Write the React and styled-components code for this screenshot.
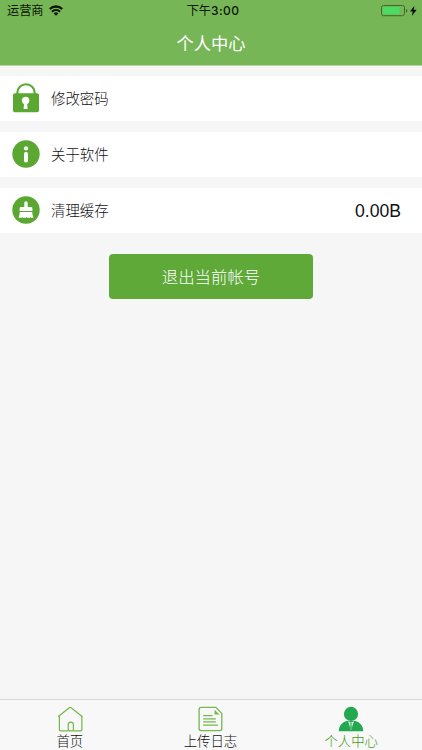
import React from "react"
import styled, { createGlobalStyle } from "styled-components"

const rows = [
  { id: "password", label: "修改密码", icon: <LockIcon /> },
  { id: "about", label: "关于软件", icon: <InfoIcon /> },
  { id: "cache", label: "清理缓存", icon: <BrushIcon />, value: "0.00B" },
]

const tabs = [
  { id: "home", label: "首页", icon: <HomeIcon /> },
  { id: "log", label: "上传日志", icon: <LogIcon /> },
  { id: "user", label: "个人中心", icon: <UserIcon />, active: true },
]

function WifiIcon() {
  return (
    <svg width="14" height="11" viewBox="0 0 14 11" fill="none" stroke="#0b1606">
      <path d="M.8 4a8.9 8.9 0 0 1 12.4 0" strokeWidth="2.3" />
      <path d="M3 6.7a5.6 5.6 0 0 1 8 0" strokeWidth="2.1" />
      <path d="M7 10.7 4.6 8.4a3.4 3.4 0 0 1 4.8 0z" fill="#0b1606" stroke="none" />
    </svg>
  )
}

function BatteryIcon() {
  return (
    <svg width="36" height="12" viewBox="0 0 36 12">
      <rect x=".5" y=".5" width="23" height="10.2" rx="2" fill="none" stroke="#41682f" />
      <rect x="2" y="2" width="16.6" height="7.2" rx=".6" fill="#4cdb62" />
      <path d="M25 4q1.4.4 1.4 1.8T25 7.6z" fill="#41682f" />
      <path d="M33.4.7 29 6.4h2.8l-1 4.6 4.9-6.2h-3z" fill="#070d04" />
    </svg>
  )
}

function LockIcon() {
  return (
    <svg width="28" height="30" viewBox="0 0 28 30">
      <path d="M5.3 12V9.9a8.7 8.7 0 0 1 17.4 0V12" fill="none" stroke="#5aa832" strokeWidth="2.1" />
      <rect x="1" y="10.2" width="26" height="19" rx="1.8" fill="#5aa832" />
      <circle cx="13.6" cy="17.5" r="3.7" fill="#fff" />
      <path d="M12.2 19h2.8l.6 7h-4z" fill="#fff" />
    </svg>
  )
}

function InfoIcon() {
  return (
    <svg width="28" height="28" viewBox="0 0 28 28">
      <circle cx="14" cy="14" r="13.7" fill="#5aa832" />
      <circle cx="14" cy="8.4" r="2.1" fill="#fff" />
      <rect x="12" y="11.9" width="4" height="10.6" rx="1.8" fill="#fff" />
    </svg>
  )
}

function BrushIcon() {
  return (
    <svg width="28" height="28" viewBox="0 0 28 28">
      <circle cx="14" cy="14" r="13.7" fill="#5aa832" />
      <path
        d="M12.3 11V7q0-1.8 1.7-1.8T15.7 7v4H19q1.4 0 1.4 1.4v2.6H7.6v-2.6Q7.6 11 9 11z"
        fill="#fff"
      />
      <path
        d="M7.8 15.9h12.4q.2 3.5 1.3 5.9h-2.6l-.6-.8-.4.8h-2.9l-.6-.9-.6.9h-2.9l-.5-.8-.7.8H6.5q1.1-2.4 1.3-5.9z"
        fill="#fff"
      />
    </svg>
  )
}

function HomeIcon() {
  return (
    <svg width="26" height="26" viewBox="0 0 26 26" fill="none" stroke="#72b84d" strokeWidth="1.2">
      <path d="M1.6 10.3 12.3 1.7q.9-.7 1.8 0l10.7 8.6" strokeLinecap="round" />
      <path d="M2.4 9.8v14q0 1 1 1h20.5q1 0 1-1v-14" />
      <path d="M11.2 24.8v-6.1a2.6 2.6 0 0 1 5.2 0v6.1" />
    </svg>
  )
}

function LogIcon() {
  return (
    <svg width="26" height="26" viewBox="0 0 26 26" fill="none" stroke="#72b84d" strokeWidth="1.3">
      <path d="M18.9 1.4H4.2q-2.1 0-2.1 2.1v19.1q0 2.1 2.1 2.1h18.5q2.1 0 2.1-2.1V7.4z" />
      <path d="M18.2 5.2v2.6h2.7z" fill="#72b84d" />
      <path d="M6.2 9.7h9.3M6.2 12.8h12.6M6.2 15.9h12.6M6.2 19.2H21" />
    </svg>
  )
}

function UserIcon() {
  return (
    <svg width="26" height="26" viewBox="0 0 26 26">
      <circle cx="13" cy="7.9" r="7.1" fill="#22a950" />
      <path d="M.8 25.3c0-5.3 3.2-9.1 8.1-10.3h8.2c4.9 1.2 8.1 5 8.1 10.3z" fill="#22a950" />
      <path d="m10.1 15.3 2.9 9 2.9-9-1.7.6h-2.4z" fill="#e5f3e9" />
      <path d="m13 16 1.2 1-.6 1.8.7 3.2-1.3 2-1.3-2 .7-3.2-.6-1.8z" fill="#5abb7a" />
    </svg>
  )
}

const App = () => {
  return (
    <>
      <GlobalStyle />
      <Screen>
        <Header>
          <StatusBar>
            <Carrier>
              运营商
              <WifiIcon />
            </Carrier>
            <Clock>
              下午<b>3:00</b>
            </Clock>
            <BatteryIcon />
          </StatusBar>
          <Title>个人中心</Title>
        </Header>
        <List>
          {rows.map(({ id, label, icon, value }) => (
            <Row key={id}>
              <RowIcon>{icon}</RowIcon>
              <RowLabel>{label}</RowLabel>
              {value && <RowValue>{value}</RowValue>}
            </Row>
          ))}
        </List>
        <LogoutButton>退出当前帐号</LogoutButton>
        <TabBar>
          {tabs.map(({ id, label, icon, active }) => (
            <Tab key={id} $active={active}>
              {icon}
              <span>{label}</span>
            </Tab>
          ))}
        </TabBar>
      </Screen>
    </>
  )
}

const GlobalStyle = createGlobalStyle`
  * {
    box-sizing: border-box;
  }
  body {
    margin: 0;
    font-family: "Noto Sans CJK SC", sans-serif;
    font-weight: 300;
  }
  svg {
    display: block;
    flex-shrink: 0;
  }
  button {
    border: 0;
    padding: 0;
    background: none;
    font-family: inherit;
    font-weight: inherit;
  }
`

const Screen = styled.div`
  display: flex;
  flex-direction: column;
  width: 100%;
  height: 750px;
  background: #f6f6f6;
`

const Header = styled.header`
  height: 66px;
  background: #76b657;
  border-bottom: 1px solid #b5d6a5;
`

const StatusBar = styled.div`
  display: grid;
  grid-template-columns: 1fr auto 1fr;
  align-items: center;
  height: 21px;
  padding: 0 5px 0 7px;
  color: #0b1606;
  font-size: 12.2px;
  font-weight: 400;
  line-height: 21px;

  > svg {
    justify-self: end;
  }
`

const Carrier = styled.div`
  display: flex;
  align-items: center;
  gap: 5px;
`

const Clock = styled.div`
  padding-left: 2px;
  white-space: nowrap;

  b {
    font-family: Inter, sans-serif;
    font-weight: 500;
    font-size: 12px;
    letter-spacing: 0.4px;
  }
`

const Title = styled.h1`
  margin: 0;
  color: #fff;
  font-size: 17.3px;
  font-weight: 400;
  line-height: 43px;
  text-align: center;
`

const List = styled.div`
  display: flex;
  flex-direction: column;
  gap: 11px;
  margin-top: 10px;
`

const Row = styled.div`
  display: flex;
  align-items: center;
  height: 45px;
  padding: 0 21px 1px 12px;
  background: #fff;
`

const RowIcon = styled.div`
  width: 28px;
  margin-right: 11px;
`

const RowLabel = styled.span`
  color: #111;
  font-size: 14.4px;
  line-height: 20px;
`

const RowValue = styled.span`
  margin-left: auto;
  padding-top: 2px;
  color: #111;
  font-family: "Liberation Sans", sans-serif;
  font-size: 17.6px;
`

const LogoutButton = styled.button`
  align-self: center;
  width: 204px;
  height: 45px;
  margin-top: 21px;
  padding-bottom: 2px;
  border-radius: 4px;
  background: #5fa938;
  color: #fff;
  font-size: 16.4px;
`

const TabBar = styled.nav`
  display: grid;
  grid-template-columns: repeat(3, 1fr);
  height: 51px;
  margin-top: auto;
  border-top: 1px solid #d8d8d8;
  background: #f8f8f8;
`

const Tab = styled.button`
  display: flex;
  flex-direction: column;
  align-items: center;
  padding: 6px 1px 0 0;
  color: ${({ $active }) => ($active ? "#429a18" : "#111")};
  font-size: 13.4px;
  line-height: 16px;
`

export default App
